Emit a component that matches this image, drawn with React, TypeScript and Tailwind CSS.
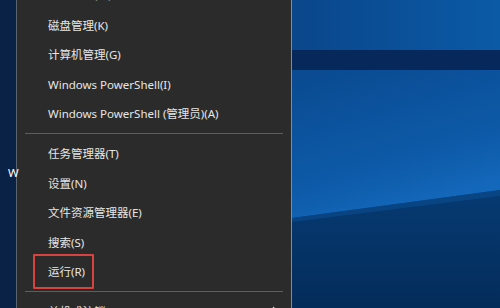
import React from "react";

const font = { fontFamily: '"Segoe UI", "Noto Sans", "Noto Sans CJK SC", sans-serif' };

function Item({ label, boxed, chevron, tall }: { label: string; boxed?: boolean; chevron?: boolean; tall?: boolean }) {
  return (
    <div className={`relative shrink-0 flex items-center pl-[31px] pr-[12px] ${tall ? "h-[32.6px]" : "h-[29.6px]"}`}>
      <span className="text-[11.5px] text-[#e6e6e6] leading-none whitespace-nowrap">{label}</span>
      {chevron && (
        <svg className="ml-auto" width="8" height="12" viewBox="0 0 8 12">
          <path d="M2 1 L7 6 L2 11" stroke="#d0d0d0" strokeWidth="1.2" fill="none" />
        </svg>
      )}
      {boxed && (
        <div className="absolute left-[16px] top-[-3px] w-[61px] h-[35px] border-2 border-[#d8423f] rounded-[1px]" />
      )}
    </div>
  );
}

function Sep() {
  return (
    <div className="h-[10px] shrink-0 pt-[4px] pl-[8px] pr-[8px]">
      <div className="h-px bg-[#5e5e5e]" />
    </div>
  );
}

function Wallpaper() {
  return (
    <svg className="w-full h-full block" viewBox="0 0 208 308" preserveAspectRatio="none">
      <defs>
        <linearGradient id="top" x1="0" y1="0" x2="1" y2="0">
          <stop offset="0" stopColor="#0a468a" />
          <stop offset="1" stopColor="#0b5aa6" />
        </linearGradient>
        <linearGradient id="mid" x1="0" y1="0" x2="0.4" y2="1">
          <stop offset="0" stopColor="#0a4a90" />
          <stop offset="0.7" stopColor="#0d5aa8" />
          <stop offset="1" stopColor="#1468bb" />
        </linearGradient>
        <linearGradient id="low" x1="0" y1="0" x2="0" y2="1">
          <stop offset="0" stopColor="#063a72" />
          <stop offset="1" stopColor="#042c5a" />
        </linearGradient>
      </defs>
      <rect x="0" y="0" width="208" height="308" fill="url(#top)" />
      <rect x="0" y="50" width="208" height="20" fill="#07285a" />
      <rect x="0" y="70" width="208" height="150" fill="url(#mid)" />
      <polygon points="0,218 208,190 208,308 0,308" fill="url(#low)" />
      <polygon points="0,218 208,190 208,196 0,222" fill="#0b4c90" opacity="0.6" />
    </svg>
  );
}

export default function App() {
  return (
    <div className="w-[500px] h-[308px] flex overflow-hidden bg-[#0b2447]" style={font}>
      <div className="w-[16px] shrink-0 bg-[#0a2246] relative">
        <span className="absolute left-[8px] top-[167px] text-[11.5px] text-white leading-none">W</span>
      </div>
      <div className="w-px shrink-0 bg-[#5a6470]" />
      <div className="w-[274px] shrink-0 bg-[#2b2b2b] flex flex-col overflow-hidden">
        <div className="mt-[-22px] flex flex-col">
          <Item label="网络连接(W)" tall />
          <Item label="磁盘管理(K)" />
          <Item label="计算机管理(G)" />
          <Item label="Windows PowerShell(I)" />
          <Item label="Windows PowerShell (管理员)(A)" />
          <Sep />
          <Item label="任务管理器(T)" />
          <Item label="设置(N)" />
          <Item label="文件资源管理器(E)" />
          <Item label="搜索(S)" />
          <Item label="运行(R)" boxed />
          <Sep />
          <Item label="关机或注销(U)" chevron />
        </div>
      </div>
      <div className="w-px shrink-0 bg-[#8a8a8a]" />
      <div className="flex-1 min-w-0">
        <Wallpaper />
      </div>
    </div>
  );
}
